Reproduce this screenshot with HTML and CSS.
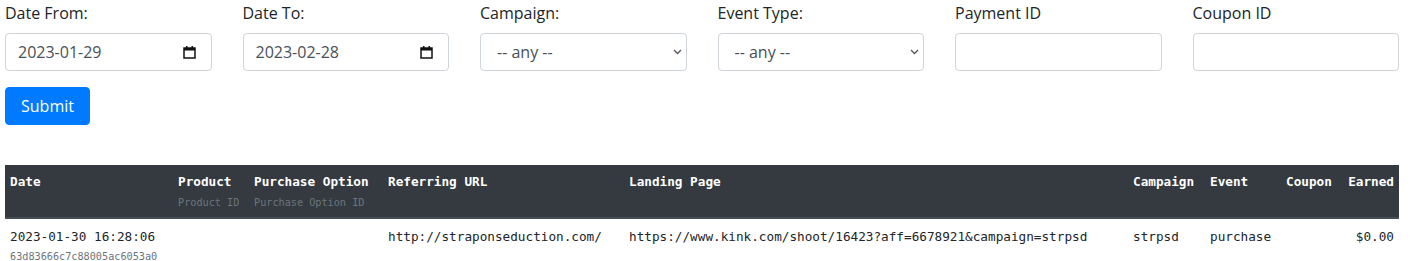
FILE: index.html
```html
<!DOCTYPE html>
<html lang="en">
<head>
    <meta charset="UTF-8">
    <meta name="viewport" content="width=device-width, initial-scale=1.0">
    <title>Affiliate Events</title>
    <link rel="stylesheet" href="styles.css">
</head>
<body>
    <form class="filters" onsubmit="return false">
        <div class="form-group">
            <label for="dateFrom">Date From:</label>
            <div class="field">
                <input type="text" id="dateFrom" class="form-control" value="2023-01-29">
                <svg class="cal-icon" width="13" height="14" viewBox="0 0 13 14">
                    <rect x="1" y="3" width="11" height="10" fill="none" stroke="#111" stroke-width="1.5"/>
                    <rect x="1" y="3" width="11" height="2.5" fill="#111"/>
                    <rect x="3" y="1" width="1.5" height="3" fill="#111"/>
                    <rect x="8.5" y="1" width="1.5" height="3" fill="#111"/>
                </svg>
            </div>
        </div>
        <div class="form-group">
            <label for="dateTo">Date To:</label>
            <div class="field">
                <input type="text" id="dateTo" class="form-control" value="2023-02-28">
                <svg class="cal-icon" width="13" height="14" viewBox="0 0 13 14">
                    <rect x="1" y="3" width="11" height="10" fill="none" stroke="#111" stroke-width="1.5"/>
                    <rect x="1" y="3" width="11" height="2.5" fill="#111"/>
                    <rect x="3" y="1" width="1.5" height="3" fill="#111"/>
                    <rect x="8.5" y="1" width="1.5" height="3" fill="#111"/>
                </svg>
            </div>
        </div>
        <div class="form-group">
            <label for="campaign">Campaign:</label>
            <div class="field">
                <select id="campaign" class="form-control">
                    <option>-- any --</option>
                </select>
                <svg class="chevron" width="9" height="6" viewBox="0 0 9 6">
                    <path d="M1 1 L4.5 4.5 L8 1" fill="none" stroke="#555" stroke-width="1.3"/>
                </svg>
            </div>
        </div>
        <div class="form-group">
            <label for="eventType">Event Type:</label>
            <div class="field">
                <select id="eventType" class="form-control">
                    <option>-- any --</option>
                </select>
                <svg class="chevron" width="9" height="6" viewBox="0 0 9 6">
                    <path d="M1 1 L4.5 4.5 L8 1" fill="none" stroke="#555" stroke-width="1.3"/>
                </svg>
            </div>
        </div>
        <div class="form-group">
            <label for="paymentId">Payment ID</label>
            <input type="text" id="paymentId" class="form-control">
        </div>
        <div class="form-group">
            <label for="couponId">Coupon ID</label>
            <input type="text" id="couponId" class="form-control">
        </div>
    </form>
    <button class="btn-submit" type="button">Submit</button>

    <table class="events">
        <colgroup>
            <col class="c-date">
            <col class="c-product">
            <col class="c-option">
            <col class="c-ref">
            <col class="c-landing">
            <col class="c-campaign">
            <col class="c-event">
            <col class="c-coupon">
            <col class="c-earned">
        </colgroup>
        <thead>
            <tr>
                <th>Date</th>
                <th>Product<small>Product ID</small></th>
                <th>Purchase Option<small>Purchase Option ID</small></th>
                <th>Referring URL</th>
                <th>Landing Page</th>
                <th>Campaign</th>
                <th>Event</th>
                <th>Coupon</th>
                <th class="num">Earned</th>
            </tr>
        </thead>
        <tbody>
            <tr>
                <td>2023-01-30 16:28:06<small>63d83666c7c88005ac6053a0</small></td>
                <td></td>
                <td></td>
                <td>http://straponseduction.com/</td>
                <td>https://www.kink.com/shoot/16423?aff=6678921&amp;campaign=strpsd</td>
                <td>strpsd</td>
                <td>purchase</td>
                <td></td>
                <td class="num">$0.00</td>
            </tr>
        </tbody>
    </table>
</body>
</html>
```

FILE: styles.css
```css
body {
    margin: 0;
    padding-top: 1px;
    font-family: "Open Sans", Arial, sans-serif;
    font-size: 16px;
    color: #212529;
    background: #fff;
}
.filters {
    display: grid;
    grid-template-columns: repeat(6, 1fr);
    column-gap: 31px;
    padding: 0 14px 0 5px;
    margin: 0;
}
.form-group {
    margin-bottom: 16px;
}
.form-group label {
    display: block;
    line-height: 24px;
    margin-bottom: 8px;
}
.field {
    position: relative;
}
.form-control {
    display: block;
    box-sizing: border-box;
    width: 100%;
    height: 38px;
    padding: 6px 12px;
    font-family: inherit;
    font-size: 16px;
    color: #495057;
    background: #fff;
    border: 1px solid #ced4da;
    border-radius: 4px;
    outline: none;
}
select.form-control {
    appearance: none;
    -webkit-appearance: none;
    padding-left: 16px;
}
.cal-icon {
    position: absolute;
    right: 16px;
    top: 12px;
}
.chevron {
    position: absolute;
    right: 5px;
    top: 16px;
}
.btn-submit {
    display: block;
    margin-left: 5px;
    height: 38px;
    padding: 6px 15px;
    font-family: inherit;
    font-size: 16px;
    color: #fff;
    background-color: #007bff;
    border: 1px solid #007bff;
    border-radius: 4px;
    cursor: pointer;
}
.events {
    table-layout: fixed;
    width: 1394px;
    margin: 40px 0 0 5px;
    border-collapse: collapse;
    font-family: "DejaVu Sans Mono", "Liberation Mono", monospace;
    font-size: 12.7px;
}
.c-date { width: 168px; }
.c-product { width: 76px; }
.c-option { width: 134px; }
.c-ref { width: 241px; }
.c-landing { width: 504px; }
.c-campaign { width: 77px; }
.c-event { width: 76px; }
.c-coupon { width: 56px; }
.c-earned { width: 62px; }
.events th, .events td {
    padding: 7px 5px;
    line-height: 19px;
    text-align: left;
    vertical-align: top;
    white-space: nowrap;
}
.events thead th {
    height: 38px;
    background-color: #343a40;
    color: #fff;
    font-weight: bold;
    border-bottom: 2px solid #454d55;
}
.events td {
    padding-top: 8px;
    color: #212529;
}
.events small {
    display: block;
    font-size: 10.2px;
    line-height: 15px;
    font-weight: normal;
    color: #6c757d;
}
.events th small {
    margin-top: 4px;
}
.events td small {
    margin-top: 3px;
}
.events .num {
    text-align: right;
}
```
